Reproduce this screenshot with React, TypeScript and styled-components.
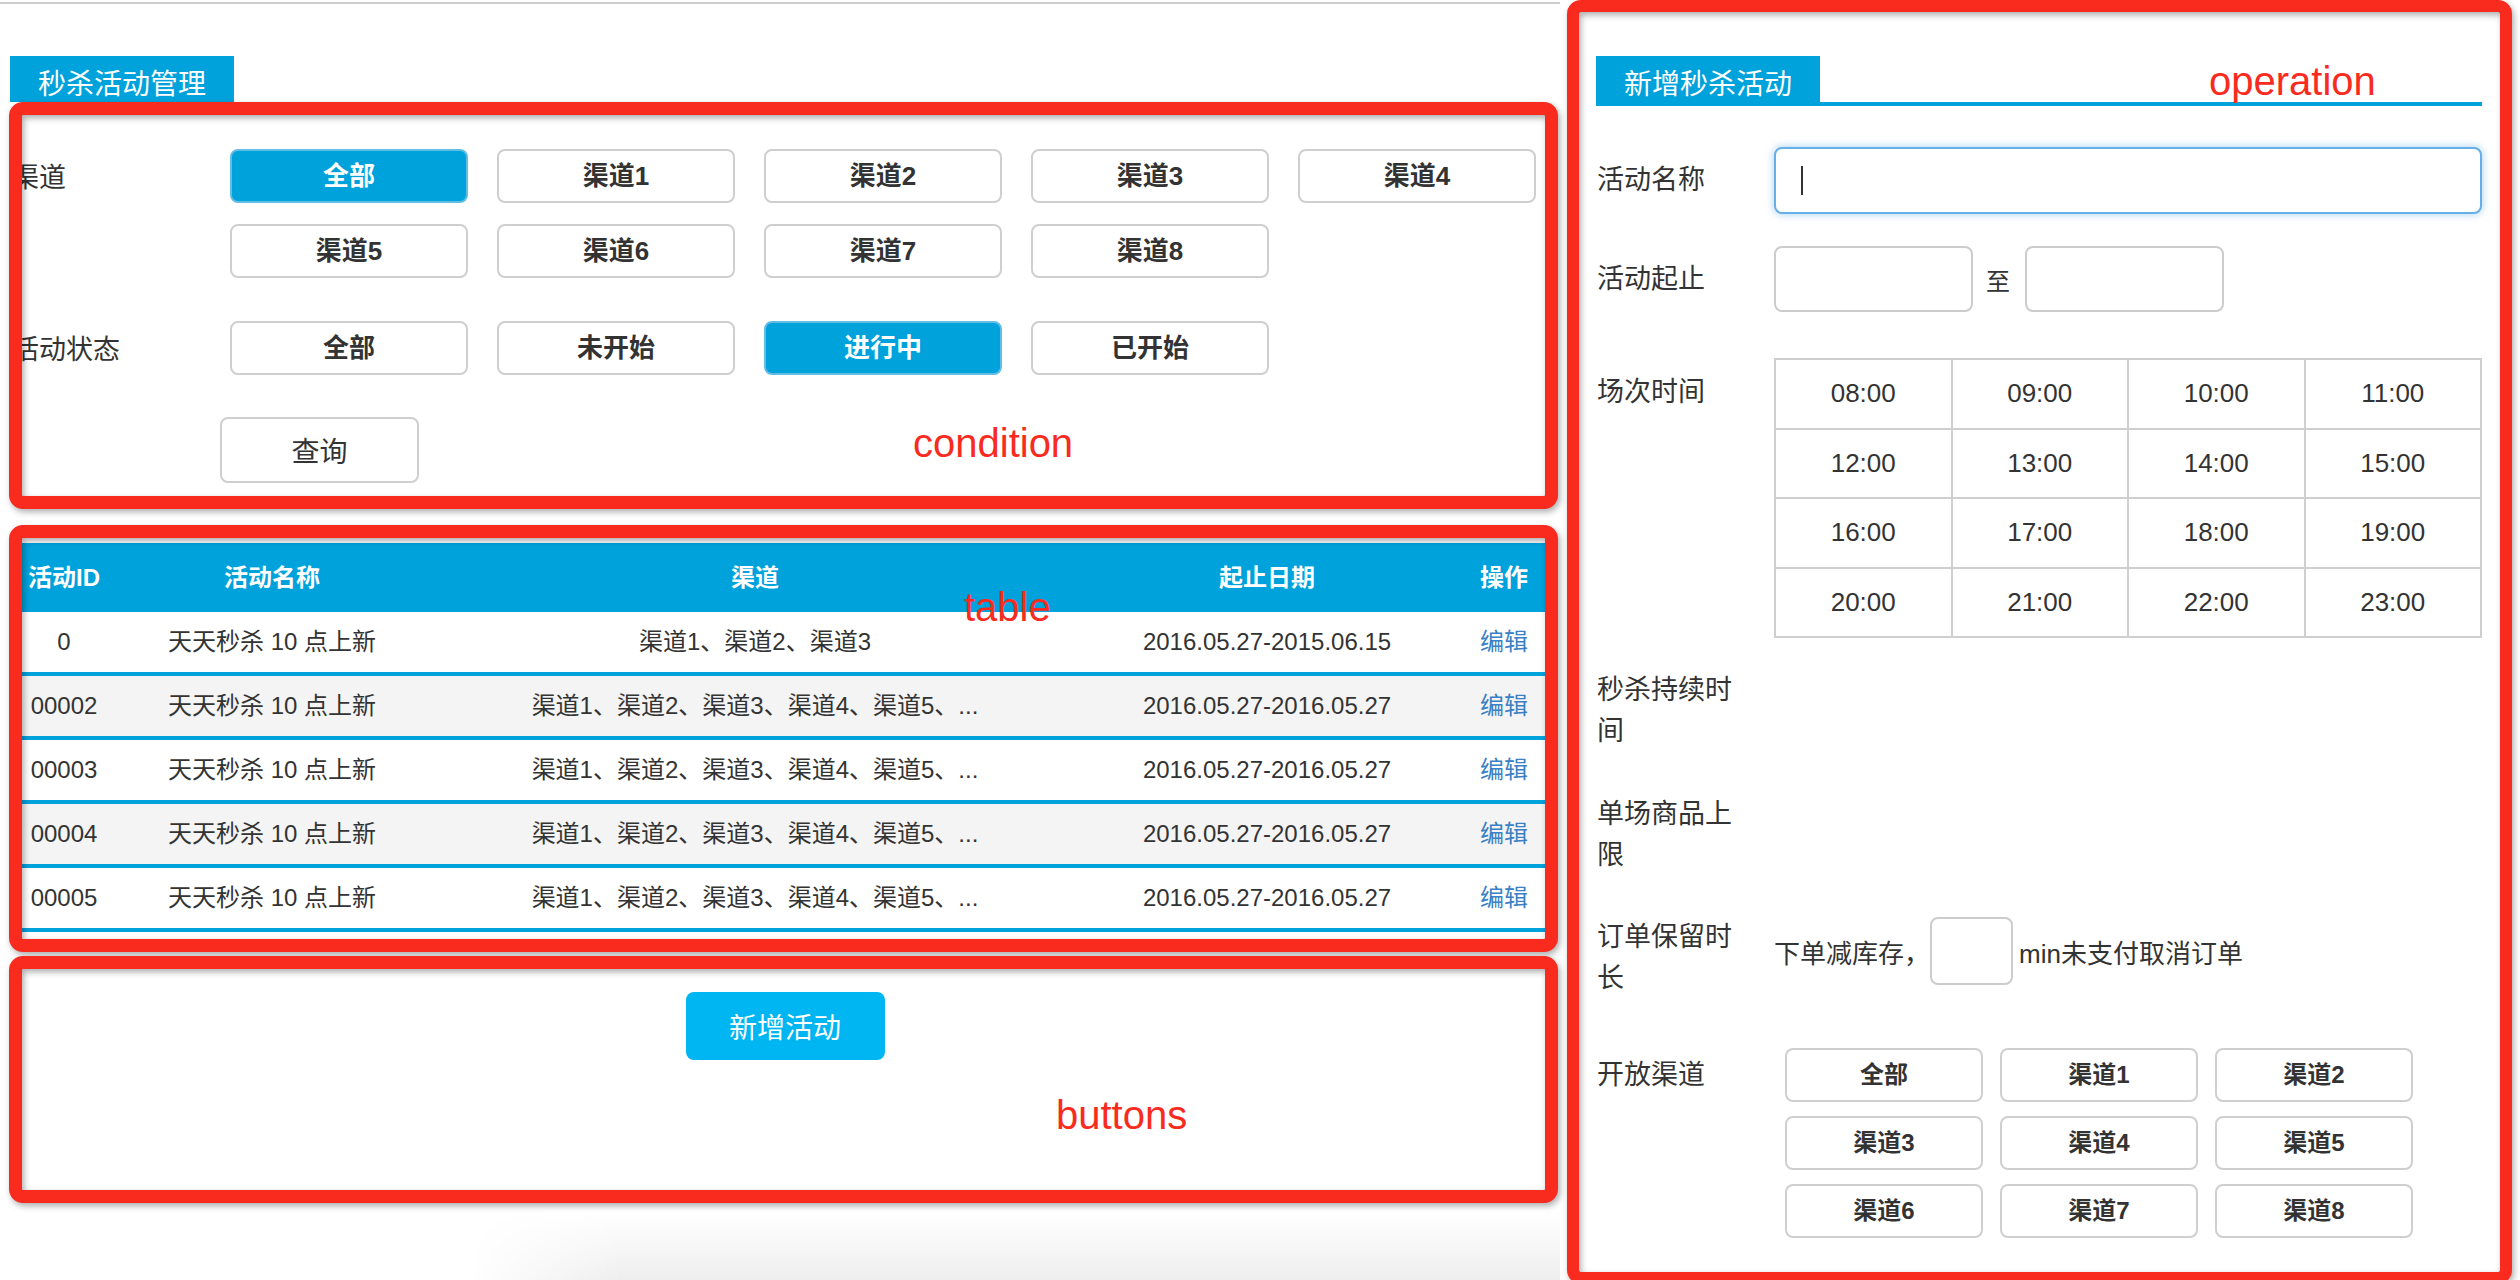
import React from 'react';
import styled, { createGlobalStyle } from 'styled-components';

const BLUE = '#00a2dc';
const RED = '#f92b1e';
const FONT = '"Liberation Sans", "Noto Sans CJK SC", sans-serif';

const GlobalStyle = createGlobalStyle`
  html, body { margin: 0; padding: 0; background: #fff; }
  body { font-family: ${FONT}; color: #333; overflow: hidden; }
  *, *::before, *::after { box-sizing: border-box; }
`;

const Page = styled.div`
  display: flex;
  align-items: flex-start;
  width: 2520px;
  height: 1280px;
  overflow: hidden;
`;

/* ---------- left column ---------- */
const LeftPane = styled.div`
  flex: 0 0 1560px;
  margin-top: 2px;
  border-top: 2px solid #cdcdcd;
  padding-top: 52px;
  display: flex;
  flex-direction: column;
`;

const Tab = styled.div<{ $ml: number }>`
  width: 224px;
  height: 46px;
  margin-left: ${(p) => p.$ml}px;
  padding-top: 15px;
  background: ${BLUE};
  color: #fff;
  font-size: 28px;
  line-height: 28px;
  text-align: center;
  white-space: nowrap;
`;

const Section = styled.section<{ $mt: number; $pt: number; $pb: number }>`
  position: relative;
  margin: ${(p) => p.$mt}px 0 0 9px;
  width: 1549px;
  padding: ${(p) => p.$pt}px 0 ${(p) => p.$pb}px 3px;
`;

const Frame = styled.div<{ $stroke: number }>`
  position: absolute;
  inset: 0;
  border: ${(p) => p.$stroke}px solid ${RED};
  border-radius: 14px;
  pointer-events: none;
  z-index: 2;
  filter: drop-shadow(2px 3px 3px rgba(0, 0, 0, 0.32));
`;

const Note = styled.span<{ $top: number; $left: number }>`
  position: absolute;
  top: ${(p) => p.$top}px;
  left: ${(p) => p.$left}px;
  z-index: 3;
  font-family: "Liberation Sans", sans-serif;
  font-size: 40px;
  line-height: 40px;
  color: ${RED};
  white-space: nowrap;
`;

const FilterRow = styled.div<{ $mb: number }>`
  display: flex;
  align-items: flex-start;
  margin-bottom: ${(p) => p.$mb}px;
`;

const FilterLabel = styled.div`
  flex: 0 0 218px;
  height: 54px;
  padding-top: 5px;
  font-size: 27px;
  line-height: 49px;
  color: #333;
  white-space: nowrap;
`;

const ChipGrid = styled.div`
  display: grid;
  grid-template-columns: repeat(5, 238px);
  column-gap: 29px;
  row-gap: 21px;
`;

const Chip = styled.button<{ $active?: boolean; $size: number; $h: number }>`
  height: ${(p) => p.$h}px;
  padding: 0;
  border: 2px solid ${(p) => (p.$active ? '#62bde4' : '#cfcfcf')};
  border-radius: 8px;
  background: ${(p) => (p.$active ? BLUE : '#fff')};
  color: ${(p) => (p.$active ? '#fff' : '#333')};
  font-family: ${FONT};
  font-weight: 700;
  font-size: ${(p) => p.$size}px;
  line-height: 1;
  cursor: pointer;
`;

const QueryRow = styled.div`
  padding-left: 208px;
`;

const QueryButton = styled.button`
  width: 199px;
  height: 66px;
  padding: 0;
  border: 2px solid #cfcfcf;
  border-radius: 8px;
  background: #fff;
  color: #333;
  font-family: ${FONT};
  font-size: 28px;
  cursor: pointer;
`;

/* table */
const Table = styled.div`
  width: 1544px;
`;

const COLS = '104px 312px 654px 370px 104px';

const HeadRow = styled.div`
  display: grid;
  grid-template-columns: ${COLS};
  height: 69px;
  background: ${BLUE};
  color: #fff;
  font-weight: 700;
  font-size: 24px;
  line-height: 69px;
  text-align: center;
`;

const BodyRow = styled.div<{ $alt: boolean }>`
  display: grid;
  grid-template-columns: ${COLS};
  height: 64px;
  border-bottom: 4px solid ${BLUE};
  background: ${(p) => (p.$alt ? '#f4f4f4' : '#fff')};
  font-size: 24px;
  line-height: 60px;
  text-align: center;
  color: #333;
`;

const Cell = styled.div`
  white-space: nowrap;
  overflow: hidden;
`;

const EditLink = styled.a`
  color: #3a80c3;
  text-decoration: none;
  cursor: pointer;
`;

const ButtonBar = styled.div`
  display: flex;
  justify-content: center;
`;

const PrimaryButton = styled.button`
  width: 199px;
  height: 68px;
  padding: 0;
  border: none;
  border-radius: 8px;
  background: #00b6f2;
  color: #fff;
  font-family: ${FONT};
  font-size: 28px;
  cursor: pointer;
`;

const Shade = styled.div`
  margin: 7px 0 0 470px;
  height: 80px;
  background: linear-gradient(to bottom, rgba(0, 0, 0, 0) 0%, rgba(0, 0, 0, 0.03) 45%, rgba(0, 0, 0, 0.08) 100%);
  mask-image: linear-gradient(to right, transparent 0%, #000 14%, #000 100%);
  -webkit-mask-image: linear-gradient(to right, transparent 0%, #000 14%, #000 100%);
`;

/* ---------- right column ---------- */
const OpPanel = styled.section`
  position: relative;
  flex: 0 0 945px;
  height: 1284px;
  margin-left: 7px;
  padding: 56px 30px 0 29px;
`;

const TabBar = styled.div`
  display: flex;
  border-bottom: 4px solid ${BLUE};
`;

const FormRow = styled.div<{ $mt: number; $align: string }>`
  display: flex;
  align-items: ${(p) => p.$align};
  margin-top: ${(p) => p.$mt}px;
`;

const FormLabel = styled.div<{ $pt?: number }>`
  flex: 0 0 178px;
  padding: ${(p) => p.$pt || 0}px 33px 0 1px;
  font-size: 27px;
  line-height: 41px;
  color: #333;
`;

const InputWrap = styled.div`
  position: relative;
`;

const TextInput = styled.input<{ $w: number; $h: number; $focus?: boolean }>`
  display: block;
  width: ${(p) => p.$w}px;
  height: ${(p) => p.$h}px;
  border: 2px solid ${(p) => (p.$focus ? '#66afe9' : '#cccccc')};
  border-radius: 8px;
  box-shadow: ${(p) => (p.$focus ? '0 0 8px rgba(102, 175, 233, 0.6)' : 'none')};
  background: #fff;
  outline: none;
  font-family: ${FONT};
  font-size: 26px;
  padding: 0 20px;
`;

const Caret = styled.span`
  position: absolute;
  left: 27px;
  top: 19px;
  width: 2px;
  height: 29px;
  background: #333;
`;

const RangeSep = styled.span`
  margin: 0 15px 0 13px;
  font-size: 24px;
  color: #333;
`;

const TimeGrid = styled.div`
  display: grid;
  grid-template-columns: repeat(4, 1fr);
  grid-auto-rows: 67.5px;
  gap: 2px;
  width: 708px;
  padding: 2px;
  background: #cfcfcf;
`;

const TimeCell = styled.div`
  display: flex;
  align-items: center;
  justify-content: center;
  background: #fff;
  font-size: 26px;
  color: #333;
`;

const InlineText = styled.span<{ $ml?: number }>`
  margin-left: ${(p) => p.$ml || 0}px;
  font-size: 26px;
  color: #333;
  white-space: nowrap;
`;

const InlineGroup = styled.div`
  display: flex;
  align-items: center;
`;

const ChannelGrid = styled.div`
  display: grid;
  grid-template-columns: repeat(3, 198px);
  column-gap: 17px;
  row-gap: 14px;
  margin-left: 11px;
`;

const channels = ['渠道1', '渠道2', '渠道3', '渠道4', '渠道5', '渠道6', '渠道7', '渠道8'];
const statuses = ['全部', '未开始', '进行中', '已开始'];
const longCh = '渠道1、渠道2、渠道3、渠道4、渠道5、...';
const rows = [
  { id: '0', name: '天天秒杀 10 点上新', ch: '渠道1、渠道2、渠道3', date: '2016.05.27-2015.06.15' },
  { id: '00002', name: '天天秒杀 10 点上新', ch: longCh, date: '2016.05.27-2016.05.27' },
  { id: '00003', name: '天天秒杀 10 点上新', ch: longCh, date: '2016.05.27-2016.05.27' },
  { id: '00004', name: '天天秒杀 10 点上新', ch: longCh, date: '2016.05.27-2016.05.27' },
  { id: '00005', name: '天天秒杀 10 点上新', ch: longCh, date: '2016.05.27-2016.05.27' },
];
const times = Array.from({ length: 16 }, (_, i) => `${String(i + 8).padStart(2, '0')}:00`);

export default function App() {
  return (
    <>
      <GlobalStyle />
      <Page>
        <LeftPane>
          <Tab $ml={10}>秒杀活动管理</Tab>

          <Section $mt={0} $pt={47} $pb={26}>
            <FilterRow $mb={43}>
              <FilterLabel>渠道</FilterLabel>
              <ChipGrid>
                {['全部', ...channels].map((c, i) => (
                  <Chip key={c} $active={i === 0} $size={26} $h={54}>
                    {c}
                  </Chip>
                ))}
              </ChipGrid>
            </FilterRow>
            <FilterRow $mb={42}>
              <FilterLabel>活动状态</FilterLabel>
              <ChipGrid>
                {statuses.map((s, i) => (
                  <Chip key={s} $active={i === 2} $size={26} $h={54}>
                    {s}
                  </Chip>
                ))}
              </ChipGrid>
            </FilterRow>
            <QueryRow>
              <QueryButton>查询</QueryButton>
            </QueryRow>
            <Frame $stroke={13} />
            <Note $top={321} $left={904}>condition</Note>
          </Section>

          <Section $mt={16} $pt={18} $pb={20}>
            <Table>
              <HeadRow>
                <Cell>活动ID</Cell>
                <Cell>活动名称</Cell>
                <Cell>渠道</Cell>
                <Cell>起止日期</Cell>
                <Cell>操作</Cell>
              </HeadRow>
              {rows.map((r, i) => (
                <BodyRow key={r.id} $alt={i % 2 === 1}>
                  <Cell>{r.id}</Cell>
                  <Cell>{r.name}</Cell>
                  <Cell>{r.ch}</Cell>
                  <Cell>{r.date}</Cell>
                  <Cell>
                    <EditLink>编辑</EditLink>
                  </Cell>
                </BodyRow>
              ))}
            </Table>
            <Frame $stroke={13} />
            <Note $top={62} $left={955}>table</Note>
          </Section>

          <Section $mt={4} $pt={36} $pb={143}>
            <ButtonBar>
              <PrimaryButton>新增活动</PrimaryButton>
            </ButtonBar>
            <Frame $stroke={13} />
            <Note $top={139} $left={1047}>buttons</Note>
          </Section>
          <Shade />
        </LeftPane>

        <OpPanel>
          <TabBar>
            <Tab $ml={0}>新增秒杀活动</Tab>
          </TabBar>

          <FormRow $mt={41} $align="center">
            <FormLabel>活动名称</FormLabel>
            <InputWrap>
              <TextInput $w={708} $h={67} $focus readOnly />
              <Caret />
            </InputWrap>
          </FormRow>

          <FormRow $mt={32} $align="center">
            <FormLabel>活动起止</FormLabel>
            <InlineGroup>
              <TextInput $w={199} $h={66} readOnly />
              <RangeSep>至</RangeSep>
              <TextInput $w={199} $h={66} readOnly />
            </InlineGroup>
          </FormRow>

          <FormRow $mt={46} $align="flex-start">
            <FormLabel $pt={14}>场次时间</FormLabel>
            <TimeGrid>
              {times.map((t) => (
                <TimeCell key={t}>{t}</TimeCell>
              ))}
            </TimeGrid>
          </FormRow>

          <FormRow $mt={32} $align="flex-start">
            <FormLabel>秒杀持续时间</FormLabel>
          </FormRow>

          <FormRow $mt={42} $align="flex-start">
            <FormLabel>单场商品上限</FormLabel>
          </FormRow>

          <FormRow $mt={41} $align="flex-start">
            <FormLabel>订单保留时长</FormLabel>
            <InlineGroup>
              <InlineText>下单减库存，</InlineText>
              <TextInput $w={83} $h={68} readOnly />
              <InlineText $ml={6}>min未支付取消订单</InlineText>
            </InlineGroup>
          </FormRow>

          <FormRow $mt={49} $align="flex-start">
            <FormLabel $pt={7}>开放渠道</FormLabel>
            <ChannelGrid>
              {['全部', ...channels].map((c) => (
                <Chip key={c} $size={24} $h={54}>
                  {c}
                </Chip>
              ))}
            </ChannelGrid>
          </FormRow>

          <Frame $stroke={12} />
          <Note $top={61} $left={642}>operation</Note>
        </OpPanel>
      </Page>
    </>
  );
}
